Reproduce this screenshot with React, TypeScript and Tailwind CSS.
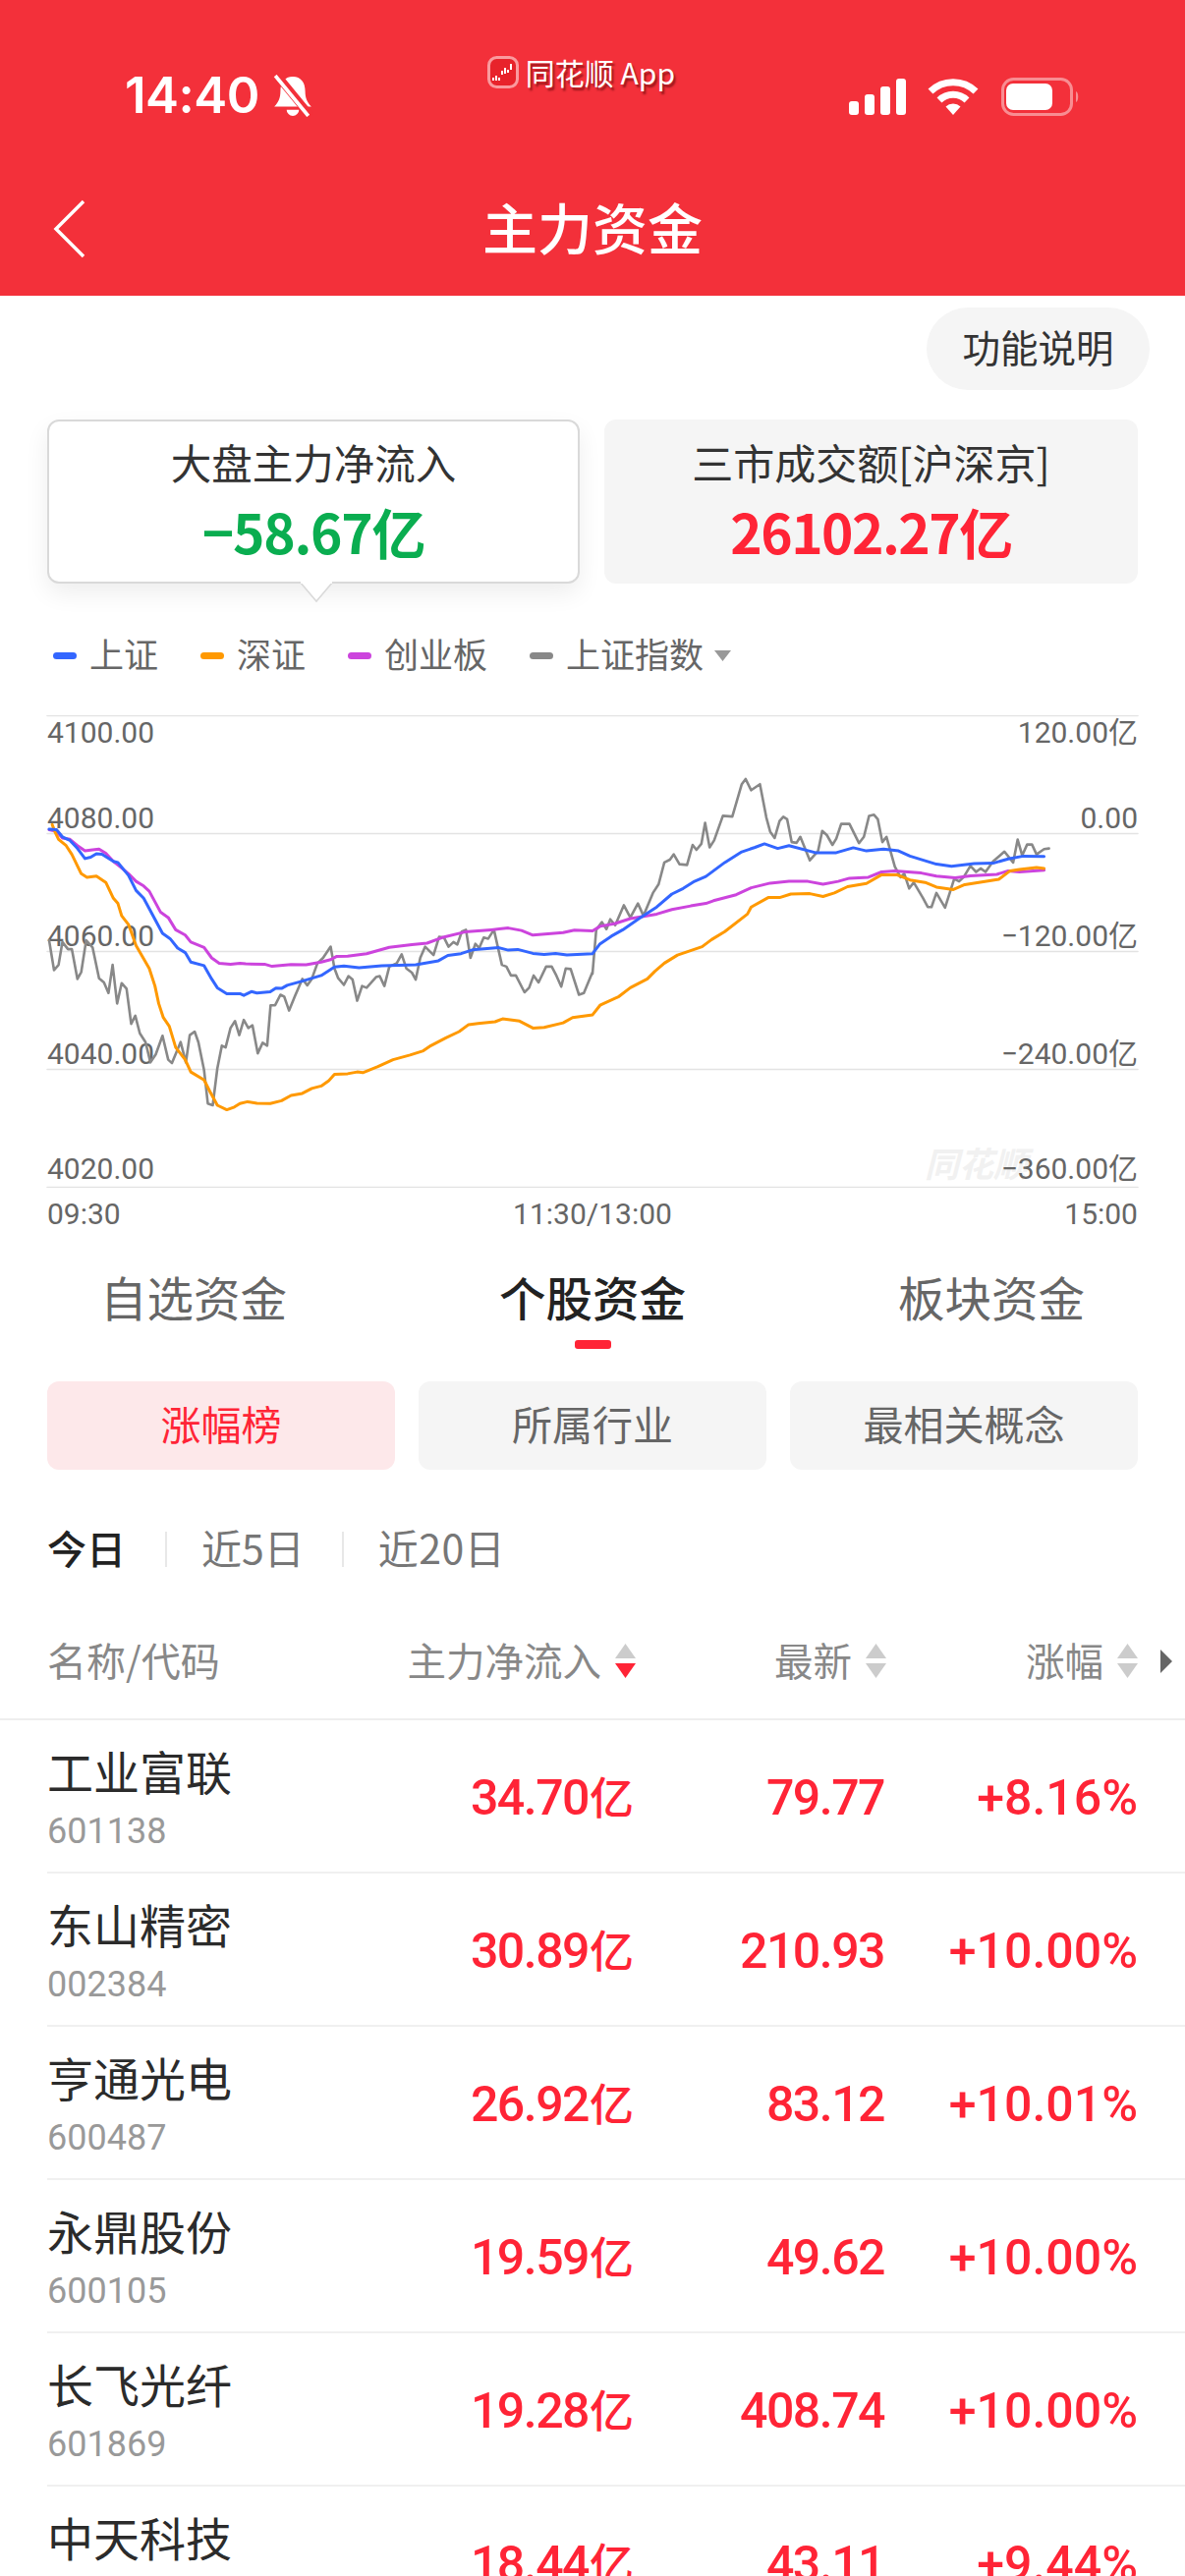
const LEFT = { x: 0, scale: 2.6 };
const RIGHT = { x: 603, scale: 2.6 };

// points are read off the two halves of the chart, then mapped to page pixels
function toPoints(left: number[][], right: number[][]) {
  const map = (pts: number[][], side: { x: number; scale: number }) =>
    pts.map(([px, py]) => `${(side.x + px / side.scale).toFixed(1)},${(py / 2.8 - 28).toFixed(1)}`);
  return [...map(left, LEFT), ...map(right, RIGHT)].join(' ');
}

const purple = toPoints(
  [[130,405],[150,410],[165,428],[185,432],[205,450],[225,465],[245,462],[262,460],[280,472],[300,495],[320,512],[340,530],[360,552],[380,565],[395,580],[410,610],[425,640],[445,655],[465,690],[490,705],[505,725],[540,740],[560,770],[580,785],[610,788],[635,785],[650,787],[700,788],[720,794],[770,789],[810,790],[850,782],[875,775],[890,766],[920,765],[970,758],[1030,740],[1090,732],[1130,728],[1170,712],[1230,696],[1300,690],[1345,685],[1380,692],[1410,705],[1490,698],[1520,691],[1568,693]],
  [[20,680],[60,672],[100,658],[170,645],[210,632],[260,622],[300,615],[320,607],[380,590],[420,570],[470,557],[520,552],[570,552],[610,560],[650,552],[680,543],[730,540],[765,525],[800,522],[870,528],[910,537],[960,542],[1000,536],[1070,532],[1100,522],[1130,525],[1195,520]]
);

const blue = toPoints(
  [[130,403],[150,405],[165,425],[185,435],[205,458],[225,487],[240,483],[255,473],[270,475],[300,495],[312,498],[340,535],[360,578],[380,600],[430,700],[450,715],[470,742],[490,755],[505,782],[540,792],[560,830],[575,855],[600,872],[635,872],[645,877],[665,866],[680,870],[715,867],[730,856],[745,857],[760,848],[800,836],[850,820],[885,796],[910,793],[950,798],[1010,792],[1100,790],[1160,778],[1185,763],[1220,758],[1250,747],[1320,741],[1345,748],[1370,746],[1410,757],[1440,760],[1470,757],[1500,762],[1568,758]],
  [[20,730],[50,708],[80,690],[120,660],[170,625],[210,588],[240,572],[270,552],[300,538],[350,498],[395,468],[430,455],[455,445],[490,458],[520,450],[590,470],[645,470],[690,456],[725,465],[770,460],[810,465],[840,480],[910,503],[950,509],[1010,501],[1060,500],[1100,488],[1140,480],[1195,481]]
);

const orange = toPoints(
  [[138,390],[145,410],[155,432],[175,450],[190,475],[215,530],[230,540],[255,537],[280,555],[300,600],[312,615],[322,650],[340,675],[360,735],[395,800],[410,850],[420,900],[432,940],[448,965],[465,1025],[490,1060],[505,1095],[540,1118],[555,1150],[575,1190],[600,1203],[620,1195],[635,1185],[655,1180],[680,1184],[715,1185],[745,1177],[770,1162],[800,1156],[825,1142],[850,1135],[870,1120],[885,1102],[920,1100],[945,1095],[960,1097],[1000,1080],[1040,1060],[1085,1047],[1120,1035],[1140,1020],[1180,998],[1215,980],[1240,960],[1265,957],[1310,952],[1330,944],[1375,950],[1410,970],[1440,968],[1490,955],[1515,940],[1568,932]],
  [[20,905],[70,880],[100,855],[145,830],[165,808],[190,785],[225,762],[290,738],[315,718],[350,695],[410,645],[420,625],[465,598],[495,598],[525,588],[575,587],[610,595],[640,585],[675,567],[725,558],[765,533],[805,533],[840,548],[880,555],[910,568],[955,575],[985,561],[1075,546],[1105,522],[1130,518],[1175,512],[1195,515]]
);

const gray = toPoints(
  [[130,720],[143,805],[155,790],[165,725],[180,745],[190,745],[205,830],[215,810],[228,720],[245,740],[262,828],[275,840],[287,870],[298,790],[310,900],[322,842],[335,858],[347,958],[358,935],[370,985],[385,1010],[398,1068],[412,1045],[430,992],[445,1060],[455,1070],[478,1010],[492,1068],[502,990],[515,980],[525,1010],[540,1090],[550,1185],[563,1190],[575,1085],[587,1020],[597,1025],[610,970],[622,950],[633,990],[645,947],[657,970],[668,962],[682,1042],[695,1012],[707,1020],[716,905],[728,905],[742,875],[752,880],[765,920],[780,880],[800,830],[813,848],[825,830],[840,785],[855,770],[875,738],[885,800],[895,828],[910,847],[922,822],[933,832],[945,892],[958,850],[970,855],[995,825],[1005,822],[1017,850],[1030,795],[1050,785],[1063,760],[1075,800],[1090,812],[1100,832],[1112,770],[1125,738],[1147,762],[1162,710],[1175,712],[1187,738],[1200,725],[1210,732],[1222,695],[1233,690],[1245,770],[1258,730],[1268,742],[1280,712],[1292,715],[1307,690],[1328,790],[1340,795],[1352,820],[1365,820],[1388,868],[1400,855],[1412,820],[1425,840],[1445,795],[1460,795],[1472,820],[1485,852],[1497,800],[1510,802],[1532,875],[1545,870],[1568,810]],
  [[0,815],[10,690],[25,668],[37,688],[47,660],[60,677],[83,620],[100,655],[120,615],[135,650],[160,585],[175,560],[190,498],[205,490],[215,475],[230,503],[250,505],[265,448],[275,462],[288,445],[298,385],[310,455],[322,435],[345,365],[370,367],[395,275],[405,260],[420,292],[443,275],[460,370],[470,410],[482,428],[495,380],[505,368],[515,375],[527,440],[540,442],[550,425],[575,492],[597,465],[608,408],[620,420],[635,448],[645,430],[658,388],[680,388],[705,443],[718,425],[732,365],[745,362],[755,375],[767,440],[778,425],[800,510],[815,540],[825,530],[838,572],[850,555],[875,600],[887,625],[897,625],[910,585],[933,627],[957,545],[970,552],[982,540],[1000,508],[1015,525],[1027,515],[1040,525],[1060,495],[1090,467],[1113,498],[1125,433],[1137,478],[1150,447],[1163,447],[1175,475],[1195,460],[1208,458]]
);

const axisLabels = [
  { left: '4100.00', right: '120.00亿', top: 'top-[0px]' },
  { left: '4080.00', right: '0.00', top: 'top-[87px]' },
  { left: '4060.00', right: '−120.00亿', top: 'top-[207px]' },
  { left: '4040.00', right: '−240.00亿', top: 'top-[327px]' },
  { left: '4020.00', right: '−360.00亿', top: 'top-[444px]' },
];

const stocks = [
  { name: '工业富联', code: '601138', flow: '34.70', price: '79.77', change: '+8.16%' },
  { name: '东山精密', code: '002384', flow: '30.89', price: '210.93', change: '+10.00%' },
  { name: '亨通光电', code: '600487', flow: '26.92', price: '83.12', change: '+10.01%' },
  { name: '永鼎股份', code: '600105', flow: '19.59', price: '49.62', change: '+10.00%' },
  { name: '长飞光纤', code: '601869', flow: '19.28', price: '408.74', change: '+10.00%' },
  { name: '中天科技', code: '600522', flow: '18.44', price: '43.11', change: '+9.44%' },
];

function StatusIcons() {
  return (
    <div className="flex items-center pt-[79px] pr-[107px]">
      <svg width="58" height="37" viewBox="0 0 58 37" fill="white">
        <rect x="0" y="23" width="10" height="14" rx="3" />
        <rect x="16" y="16" width="10" height="21" rx="3" />
        <rect x="32" y="8" width="10" height="29" rx="3" />
        <rect x="48" y="0" width="10" height="37" rx="3" />
      </svg>
      <svg className="ml-[22px]" width="52" height="37" viewBox="0 0 52 37" fill="none" stroke="white" strokeWidth="7">
        <path d="M3 13 A33 33 0 0 1 49 13" />
        <path d="M12 22 A20 20 0 0 1 40 22" />
        <path d="M26 37 L18.5 28.5 A11 11 0 0 1 33.500 28.500 Z" fill="white" stroke="none" />
      </svg>
      <svg className="ml-[23px]" width="80" height="39" viewBox="0 0 80 39" fill="none">
        <rect x="1.5" y="1.500" width="70" height="36" rx="11" stroke="white" strokeOpacity="0.45" strokeWidth="3" />
        <rect x="5" y="6" width="47" height="27" rx="7" fill="white" />
        <path d="M76 14 C79 15 79 24 76 25 Z" fill="white" fillOpacity="0.45" />
      </svg>
    </div>
  );
}

function RecordingLabel() {
  return (
    <div className="flex items-center pt-[57px]">
      <svg width="32" height="33" viewBox="0 0 32 33">
        <rect x="1.500" y="1.500" width="29" height="30" rx="8" fill="#e8232b" stroke="#fa9a9e" strokeWidth="3" />
        <path d="M6 22v3M9 20v5M12 22v3M15 15v4M18 12v6M21 14v3M24 8v6" stroke="white" strokeWidth="2" />
      </svg>
      <span className="ml-[7px] text-[30px] leading-[33px] text-white [text-shadow:2px_3px_2px_rgba(80,0,0,0.55)]">同花顺 App</span>
    </div>
  );
}

function Header() {
  return (
    <div className="h-[301px] bg-[#f3303a] text-white">
      <div className="flex h-[170px] items-start justify-between">
        <div className="flex items-center pt-[70px] pl-[127px]">
          <span className="font-['Inter'] text-[51px] leading-[54px] font-semibold tracking-[-0.5px]">14:40</span>
          <svg className="ml-[13px]" width="42" height="43" viewBox="0 0 40 41">
            <path d="M20 2c-8 0-12 6-12 14 0 7-2 11-6 15h36c-4-4-6-8-6-15 0-8-4-14-12-14z" fill="white" />
            <path d="M14 34a6 6 0 0 0 12 0z" fill="white" />
            <path d="M5 1 L37 40" stroke="#f3303a" strokeWidth="8" />
            <path d="M3 1 L35 40" stroke="white" strokeWidth="3.500" />
          </svg>
        </div>
        <RecordingLabel />
        <StatusIcons />
      </div>
      <div className="relative flex h-[126px] items-center justify-center">
        <svg className="absolute top-[33px] left-[53px]" width="36" height="60" viewBox="0 0 36 60" fill="none" stroke="white" strokeWidth="3.500">
          <path d="M32 2 L4 30 L32 58" />
        </svg>
        <span className="pb-[6px] text-[56px] leading-[64px] font-medium">主力资金</span>
      </div>
    </div>
  );
}

function SummaryCards() {
  return (
    <div className="mt-[30px] flex gap-[25px] px-[48px]">
      <div className="relative flex h-[167px] w-[542px] flex-col items-center rounded-[12px] border-2 border-[#d9d9d9] bg-white shadow-[0_10px_24px_rgba(0,0,0,0.07)]">
        <span className="mt-[16px] text-[41.5px] leading-[50px] text-[#333]">大盘主力净流入</span>
        <span className="mt-[11px] text-[55px] leading-[68px] font-bold tracking-[-1.2px] text-[#0aad50]">−58.67亿</span>
        <svg className="absolute top-[163px] left-[254px]" width="36" height="22" viewBox="0 0 36 22">
          <path d="M1 0 L18 20 L35 0" fill="white" stroke="#d9d9d9" strokeWidth="1.500" />
          <path d="M2 0 H34" stroke="white" strokeWidth="4" />
        </svg>
      </div>
      <div className="flex h-[167px] w-[543px] flex-col items-center rounded-[12px] bg-[#f5f5f5]">
        <span className="mt-[18px] text-[42px] leading-[50px] text-[#333]">三市成交额[沪深京]</span>
        <span className="mt-[11px] text-[55px] leading-[68px] font-bold tracking-[-1.5px] text-[#ff2436]">26102.27亿</span>
      </div>
    </div>
  );
}

function LegendItem({ color, label }: { color: string; label: string }) {
  return (
    <div className="flex items-center gap-[13px]">
      <span className={`h-[7px] w-[24px] rounded-full ${color}`} />
      <span className="pb-[4px] text-[35px] leading-[54px] text-[#666]">{label}</span>
    </div>
  );
}

function Legend() {
  return (
    <div className="mt-[46px] flex h-[54px] items-center gap-[43px] pl-[54px]">
      <LegendItem color="bg-[#3366ff]" label="上证" />
      <LegendItem color="bg-[#ff9900]" label="深证" />
      <LegendItem color="bg-[#cc44dd]" label="创业板" />
      <div className="flex items-center">
        <LegendItem color="bg-[#888888]" label="上证指数" />
        <svg className="ml-[11px]" width="17" height="11" viewBox="0 0 17 11" fill="#999">
          <path d="M0 0 H17 L8.500 11 Z" />
        </svg>
      </div>
    </div>
  );
}

function Chart() {
  return (
    <div className="mt-[34px]">
      <div className="relative h-[481px] font-['Roboto','Noto_Sans_CJK_SC',sans-serif] text-[30px] leading-[36px] text-[#666]">
        <span className="absolute top-[441px] left-[941px] text-[35px] leading-[36px] font-bold text-[#f1f1f1] italic">同花顺</span>
        {axisLabels.map((l) => (
          <div key={l.left} className={`absolute right-[48px] left-[48px] flex justify-between ${l.top}`}>
            <span>{l.left}</span>
            <span>{l.right}</span>
          </div>
        ))}
        <svg className="absolute inset-0" width="1206" height="481" viewBox="0 0 1206 481" fill="none" strokeLinejoin="round" strokeLinecap="round">
          {[0, 120, 240, 360, 480].map((y) => (
            <line key={y} x1="48" x2="1158" y1={y + 0.5} y2={y + 0.5} stroke="#e3e3e3" strokeWidth="1.500" />
          ))}
          <polyline points={gray} stroke="#888888" strokeWidth="2.600" />
          <polyline points={purple} stroke="#cc44dd" strokeWidth="3" />
          <polyline points={orange} stroke="#ff9900" strokeWidth="3" />
          <polyline points={blue} stroke="#3366ff" strokeWidth="3" />
        </svg>
      </div>
      <div className="flex h-[52px] items-center justify-between px-[48px] font-['Roboto',sans-serif] text-[30px] text-[#666]">
        <span>09:30</span>
        <span>11:30/13:00</span>
        <span>15:00</span>
      </div>
    </div>
  );
}

function Tabs() {
  return (
    <div className="flex items-start justify-between px-[102px] pt-[37px] text-[47.5px] leading-[44px] text-[#666]">
      <span>自选资金</span>
      <div className="flex flex-col items-center">
        <span className="font-medium text-[#222]">个股资金</span>
        <span className="mt-[22px] h-[9px] w-[37px] rounded-[3px] bg-[#ff2436]" />
      </div>
      <span>板块资金</span>
    </div>
  );
}

function SubTabs() {
  return (
    <div className="mt-[33px] flex gap-[24px] px-[48px] text-[41px]">
      <button className="h-[90px] w-[354px] rounded-[12px] bg-[#fde8ea] pb-[5px] text-[#ff2436]">涨幅榜</button>
      <button className="h-[90px] w-[354px] rounded-[12px] bg-[#f5f5f5] pb-[5px] text-[#666]">所属行业</button>
      <button className="h-[90px] w-[354px] rounded-[12px] bg-[#f5f5f5] pb-[5px] text-[#666]">最相关概念</button>
    </div>
  );
}

function PeriodTabs() {
  return (
    <div className="mt-[55px] flex h-[52px] items-center pl-[48px] text-[41px] text-[#777]">
      <span className="pb-[5px] text-[40px] font-medium text-[#222]">今日</span>
      <span className="mr-[35px] ml-[40px] h-[36px] w-[2px] bg-[#e8e8e8]" />
      <span className="pb-[5px]">近5日</span>
      <span className="mr-[35px] ml-[38px] h-[36px] w-[2px] bg-[#e8e8e8]" />
      <span className="pb-[5px] tracking-[0.5px]">近20日</span>
    </div>
  );
}

function SortIcon({ active }: { active?: boolean }) {
  return (
    <svg className="ml-[14px]" width="21" height="36" viewBox="0 0 21 36">
      <path d="M10.500 0 L21 15 H0 Z" fill="#cccccc" />
      <path d="M0 20 H21 L10.500 35 Z" fill={active ? '#ff2436' : '#cccccc'} />
    </svg>
  );
}

function TableHeader() {
  return (
    <div className="relative mt-[30px] flex h-[118px] items-center border-b-2 border-[#eeeeee] pl-[48px] text-[39.5px] text-[#888]">
      <span className="w-[345px] pb-[5px] text-[40px]">名称/代码</span>
      <div className="flex w-[254px] items-center justify-end">
        <span className="pb-[5px]">主力净流入</span>
        <SortIcon active />
      </div>
      <div className="flex w-[255px] items-center justify-end">
        <span className="pb-[5px]">最新</span>
        <SortIcon />
      </div>
      <div className="flex w-[256px] items-center justify-end">
        <span className="pb-[5px]">涨幅</span>
        <SortIcon />
      </div>
      <svg className="ml-[23px]" width="12" height="24" viewBox="0 0 12 24" fill="#666">
        <path d="M0 0 L12 12 L0 24 Z" />
      </svg>
    </div>
  );
}

function StockRow({ name, code, flow, price, change }: (typeof stocks)[number]) {
  return (
    <div className="ml-[48px] flex h-[156px] items-center border-b-2 border-[#f0f0f0] font-['Roboto','Noto_Sans_CJK_SC',sans-serif]">
      <div className="flex w-[345px] flex-col self-start pt-[27px]">
        <span className="text-[47px] leading-[56px] text-[#2b2b2b]">{name}</span>
        <span className="mt-[10px] text-[36px] leading-[40px] text-[#999]">{code}</span>
      </div>
      <span className="w-[252px] pt-[4px] text-right text-[50px] font-medium tracking-[-1.5px] text-[#ff2436]">
        {flow}
        <span className="ml-[1px] text-[45px] tracking-normal">亿</span>
      </span>
      <span className="w-[255px] pt-[4px] text-right text-[50px] font-medium tracking-[-1.5px] text-[#ff2436]">{price}</span>
      <span className="w-[258px] pt-[4px] text-right text-[50px] font-medium text-[#ff2436]">{change}</span>
    </div>
  );
}

function App() {
  return (
    <div className="h-[2622px] w-[1206px] overflow-hidden bg-white font-['Noto_Sans_CJK_SC','Noto_Sans',sans-serif]">
      <Header />
      <div className="flex justify-end pt-[12px] pr-[36px]">
        <button className="h-[84px] w-[227px] rounded-full bg-[#f5f5f5] pb-[5px] text-[38.500px] text-[#333]">功能说明</button>
      </div>
      <SummaryCards />
      <Legend />
      <Chart />
      <Tabs />
      <SubTabs />
      <PeriodTabs />
      <TableHeader />
      {stocks.map((s) => (
        <StockRow key={s.code} {...s} />
      ))}
    </div>
  );
}

export default App;
